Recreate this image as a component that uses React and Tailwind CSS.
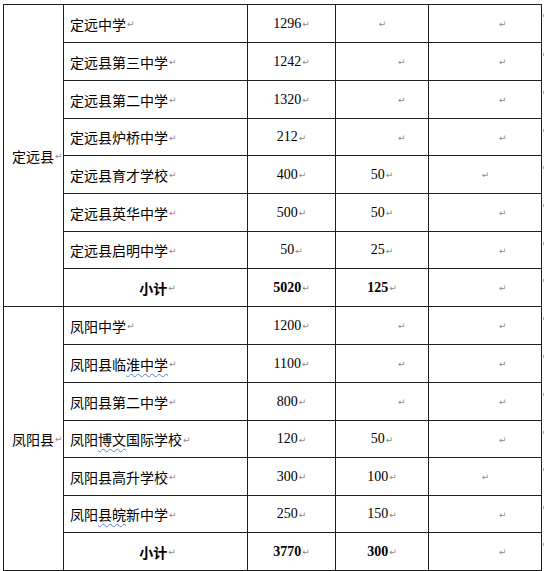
import React from "react";

const Mark = () => (
  <span className="font-['DejaVu_Sans',sans-serif] text-[9px] leading-none text-[#8a8a8a] ml-[1px] translate-y-[1px] shrink-0">↵</span>
);

const cjk = "font-['Noto_Sans_CJK_SC','Noto_Sans',sans-serif] text-[14px] leading-none text-black whitespace-nowrap shrink-0";
const num = "font-['Liberation_Serif',serif] text-[14px] leading-none text-black whitespace-nowrap";
const cell = "border-r border-b border-[#1e1e1e] flex items-center whitespace-nowrap overflow-hidden";

const Wavy = ({ children }) => (
  <span className="underline decoration-wavy decoration-[#5b7fd6] decoration-1 underline-offset-[3px]">{children}</span>
);

const group1 = [
  { name: "定远中学", n1: "1296", n2: "", m4: "c", m5: "o" },
  { name: "定远县第三中学", n1: "1242", n2: "", m4: "o", m5: "o" },
  { name: "定远县第二中学", n1: "1320", n2: "", m4: "o", m5: "o" },
  { name: "定远县炉桥中学", n1: "212", n2: "", m4: "o", m5: "o" },
  { name: "定远县育才学校", n1: "400", n2: "50", m4: "c", m5: "c" },
  { name: "定远县英华中学", n1: "500", n2: "50", m4: "c", m5: "o" },
  { name: "定远县启明中学", n1: "50", n2: "25", m4: "c", m5: "o" },
  { name: "小计", n1: "5020", n2: "125", m4: "c", m5: "o", bold: true },
];

const group2 = [
  { name: "凤阳中学", n1: "1200", n2: "", m4: "o", m5: "o" },
  { name: ["凤阳县临", <Wavy key="w">淮中学</Wavy>], n1: "1100", n2: "", m4: "o", m5: "o" },
  { name: "凤阳县第二中学", n1: "800", n2: "", m4: "o", m5: "o" },
  { name: ["凤阳", <Wavy key="w">博文</Wavy>, "国际学校"], n1: "120", n2: "50", m4: "c", m5: "o" },
  { name: "凤阳县高升学校", n1: "300", n2: "100", m4: "c", m5: "c" },
  { name: ["凤阳", <Wavy key="w">县皖</Wavy>, "新中学"], n1: "250", n2: "150", m4: "c", m5: "o" },
  { name: "小计", n1: "3770", n2: "300", m4: "c", m5: "o", bold: true },
];

function Row({ r, first }) {
  const top = first ? " border-t" : "";
  return (
    <>
      {r.bold ? (
        <div className={`${cell}${top} justify-center pl-[4px]`}>
          <span className={`${cjk} font-bold`}>{r.name}</span>
          <Mark />
        </div>
      ) : (
        <div className={`${cell}${top} pl-[6px]`}>
          <span className={cjk}>{r.name}</span>
          <Mark />
        </div>
      )}
      <div className={`${cell}${top} justify-center`}>
        <span className={`${num} ${r.bold ? "font-bold" : ""}`}>{r.n1}</span>
        <Mark />
      </div>
      {r.m4 === "o" ? (
        <div className={`${cell}${top} pl-[61px]`}>
          <Mark />
        </div>
      ) : (
        <div className={`${cell}${top} justify-center`}>
          {r.n2 && <span className={`${num} ${r.bold ? "font-bold" : ""}`}>{r.n2}</span>}
          <Mark />
        </div>
      )}
      {r.m5 === "o" ? (
        <div className={`${cell}${top} pl-[69px]`}>
          <Mark />
        </div>
      ) : (
        <div className={`${cell}${top} justify-center`}>
          <Mark />
        </div>
      )}
      <div className="flex items-start">
        <div className="ml-[1px] mt-[10px] w-[1px] h-[3px] bg-[#b0b0b0]" />
      </div>
    </>
  );
}

export default function App() {
  return (
    <div className="bg-white w-[545px] h-[571px] overflow-hidden">
      <div className="ml-[3px] mt-[4px] grid grid-cols-[61px_184px_88px_93px_113px_4px] grid-rows-[39px_38px_38px_37px_38px_38px_37px_38px_38px_38px_38px_37px_38px_37px_38px]">
        <div className={`${cell} border-l border-t row-span-8 pl-[8px]`}>
          <span className={cjk}>定远县</span>
          <Mark />
        </div>
        {group1.map((r, i) => (
          <Row key={"a" + i} r={r} first={i === 0} />
        ))}
        <div className={`${cell} border-l row-span-7 pl-[8px]`}>
          <span className={cjk}>凤阳县</span>
          <Mark />
        </div>
        {group2.map((r, i) => (
          <Row key={"b" + i} r={r} first={false} />
        ))}
      </div>
    </div>
  );
}
